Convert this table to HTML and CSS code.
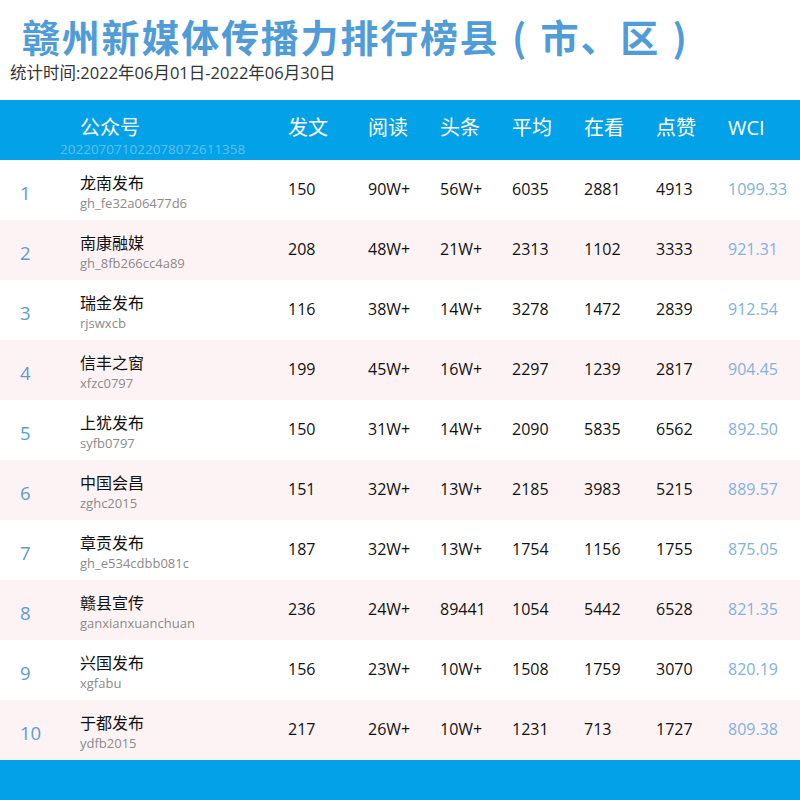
FILE: index.html
```html
<!DOCTYPE html>
<html lang="zh">
<head>
<meta charset="utf-8">
<link rel="stylesheet" href="styles.css">
</head>
<body>
<div class="page">
  <h1 class="title">赣州新媒体传播力排行榜县 ( 市、区 )</h1>
  <div class="subtitle">统计时间:2022年06月01日-2022年06月30日</div>
  <div class="table">
    <div class="row head">
      <div class="c rank"></div>
      <div class="c name"><span class="hname">公众号</span><span class="wm">20220707102207807261135​8</span></div>
      <div class="c">发文</div>
      <div class="c">阅读</div>
      <div class="c">头条</div>
      <div class="c">平均</div>
      <div class="c">在看</div>
      <div class="c">点赞</div>
      <div class="c">WCI</div>
    </div>
    <div class="row">
      <div class="c rank">1</div>
      <div class="c name"><span class="n">龙南发布</span><span class="id">gh_fe32a06477d6</span></div>
      <div class="c">150</div><div class="c">90W+</div><div class="c">56W+</div><div class="c">6035</div><div class="c">2881</div><div class="c">4913</div><div class="c wci">1099.33</div>
    </div>
    <div class="row alt">
      <div class="c rank">2</div>
      <div class="c name"><span class="n">南康融媒</span><span class="id">gh_8fb266cc4a89</span></div>
      <div class="c">208</div><div class="c">48W+</div><div class="c">21W+</div><div class="c">2313</div><div class="c">1102</div><div class="c">3333</div><div class="c wci">921.31</div>
    </div>
    <div class="row">
      <div class="c rank">3</div>
      <div class="c name"><span class="n">瑞金发布</span><span class="id">rjswxcb</span></div>
      <div class="c">116</div><div class="c">38W+</div><div class="c">14W+</div><div class="c">3278</div><div class="c">1472</div><div class="c">2839</div><div class="c wci">912.54</div>
    </div>
    <div class="row alt">
      <div class="c rank">4</div>
      <div class="c name"><span class="n">信丰之窗</span><span class="id">xfzc0797</span></div>
      <div class="c">199</div><div class="c">45W+</div><div class="c">16W+</div><div class="c">2297</div><div class="c">1239</div><div class="c">2817</div><div class="c wci">904.45</div>
    </div>
    <div class="row">
      <div class="c rank">5</div>
      <div class="c name"><span class="n">上犹发布</span><span class="id">syfb0797</span></div>
      <div class="c">150</div><div class="c">31W+</div><div class="c">14W+</div><div class="c">2090</div><div class="c">5835</div><div class="c">6562</div><div class="c wci">892.50</div>
    </div>
    <div class="row alt">
      <div class="c rank">6</div>
      <div class="c name"><span class="n">中国会昌</span><span class="id">zghc2015</span></div>
      <div class="c">151</div><div class="c">32W+</div><div class="c">13W+</div><div class="c">2185</div><div class="c">3983</div><div class="c">5215</div><div class="c wci">889.57</div>
    </div>
    <div class="row">
      <div class="c rank">7</div>
      <div class="c name"><span class="n">章贡发布</span><span class="id">gh_e534cdbb081c</span></div>
      <div class="c">187</div><div class="c">32W+</div><div class="c">13W+</div><div class="c">1754</div><div class="c">1156</div><div class="c">1755</div><div class="c wci">875.05</div>
    </div>
    <div class="row alt">
      <div class="c rank">8</div>
      <div class="c name"><span class="n">赣县宣传</span><span class="id">ganxianxuanchuan</span></div>
      <div class="c">236</div><div class="c">24W+</div><div class="c">89441</div><div class="c">1054</div><div class="c">5442</div><div class="c">6528</div><div class="c wci">821.35</div>
    </div>
    <div class="row">
      <div class="c rank">9</div>
      <div class="c name"><span class="n">兴国发布</span><span class="id">xgfabu</span></div>
      <div class="c">156</div><div class="c">23W+</div><div class="c">10W+</div><div class="c">1508</div><div class="c">1759</div><div class="c">3070</div><div class="c wci">820.19</div>
    </div>
    <div class="row alt">
      <div class="c rank">10</div>
      <div class="c name"><span class="n">于都发布</span><span class="id">ydfb2015</span></div>
      <div class="c">217</div><div class="c">26W+</div><div class="c">10W+</div><div class="c">1231</div><div class="c">713</div><div class="c">1727</div><div class="c wci">809.38</div>
    </div>
  </div>
  <div class="footer"></div>
</div>
</body>
</html>
```

FILE: styles.css
```css
* { box-sizing: border-box; margin: 0; padding: 0; }
html, body { width: 800px; height: 800px; background: #fff; }
body {
  font-family: "Open Sans", "Noto Sans CJK SC", sans-serif;
  color: #111;
}
.page { width: 800px; height: 800px; display: flex; flex-direction: column; }
.title {
  font-family: "Noto Sans CJK SC", sans-serif;
  font-weight: 700;
  font-size: 38px;
  line-height: 44px;
  letter-spacing: 1.8px;
  word-spacing: 2px;
  color: #4f9cd8;
  padding: 14px 0 0 22px;
  height: 62px;
  white-space: nowrap;
}
.subtitle {
  font-family: "Open Sans", "Noto Sans CJK SC", sans-serif;
  font-size: 16.5px;
  line-height: 22px;
  color: #333;
  padding-left: 10px;
  height: 38px;
}
.table { display: flex; flex-direction: column; }
.row {
  display: grid;
  grid-template-columns: 80px 208px 80px 72px 72px 72px 72px 72px 72px;
  height: 60px;
  background: #fff;
}
.row.alt { background: #fef3f4; }
.c {
  font-size: 16px;
  line-height: 20px;
  display: flex;
  align-items: center;
  padding-bottom: 2px;
  white-space: nowrap;
}
.rank {
  font-size: 18.5px;
  color: #5b9bd5;
  padding: 6px 0 0 20px;
}
.name {
  flex-direction: column;
  align-items: flex-start;
  justify-content: flex-start;
  padding: 13px 0 0 0;
}
.name .n { font-size: 16px; line-height: 20px; }
.name .id { font-size: 13px; line-height: 16px; color: #8a8a8a; margin-top: 2px; }
.wci { color: #82b1dd; }
.head { background: #03a1e8; color: #fff; }
.head .c { font-size: 20px; padding-bottom: 4px; }
.head .name { padding: 16px 0 0 0; }
.head .hname { font-size: 20px; line-height: 24px; }
.head .wm {
  font-size: 13.5px;
  line-height: 16px;
  color: rgba(255, 255, 255, 0.36);
  margin-left: -20px;
  margin-top: 1px;
}
.footer { background: #03a1e8; height: 40px; }
```
